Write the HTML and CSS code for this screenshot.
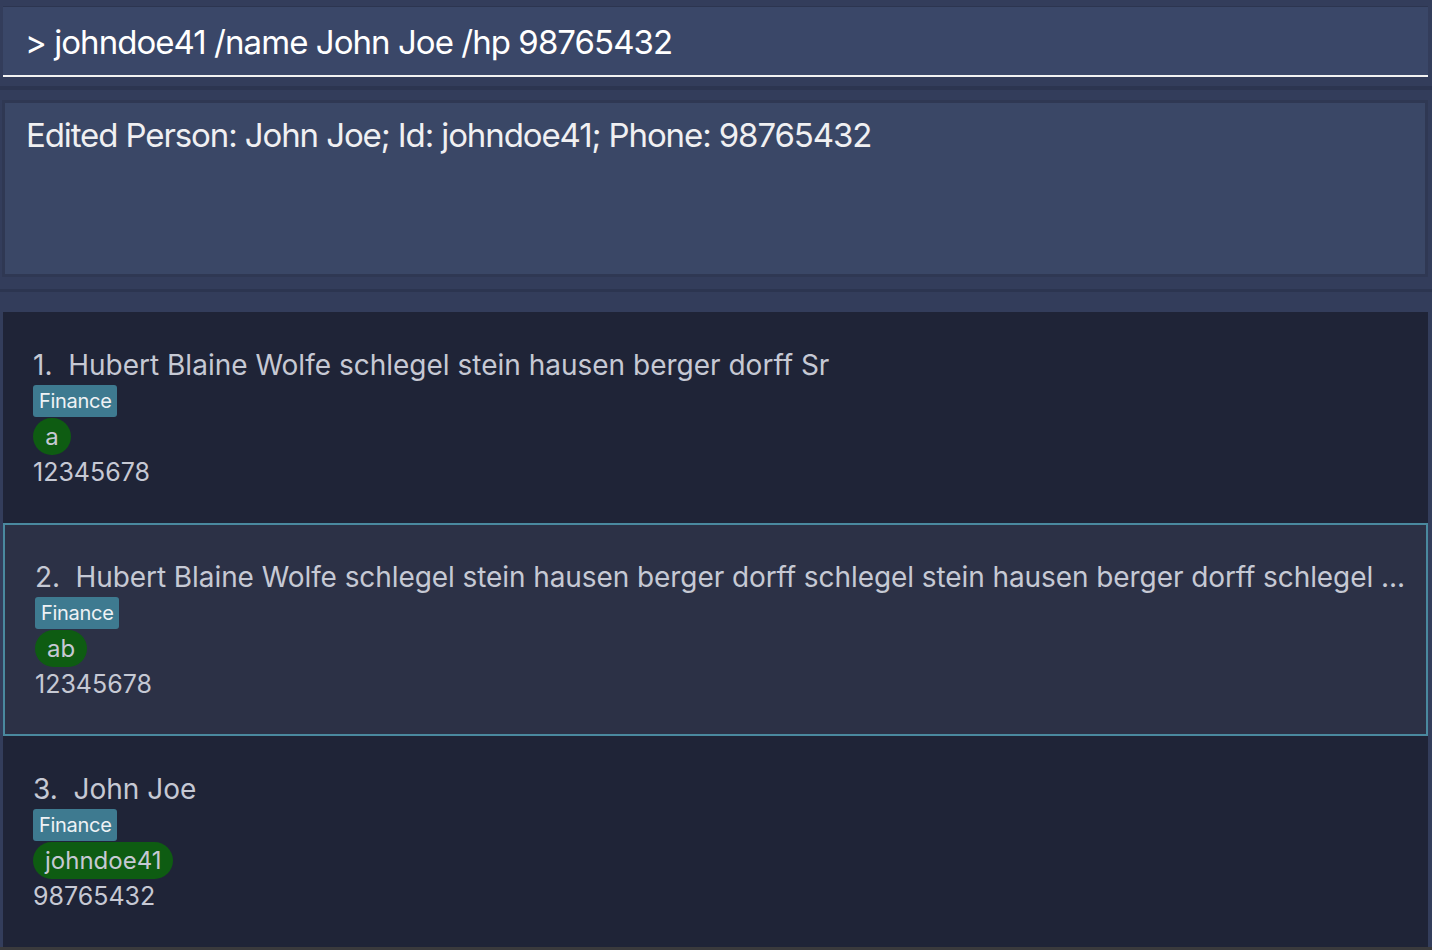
FILE: index.html
```html
<!DOCTYPE html>
<html>
<head>
<meta charset="utf-8">
<link rel="stylesheet" href="styles.css">
</head>
<body>
<div class="app">
  <div class="cmd-pane">
    <div class="cmd-box">&gt; johndoe41 /name John Joe /hp 98765432</div>
  </div>
  <div class="result-pane">
    <div class="result-box">Edited Person: John Joe; Id: johndoe41; Phone: 98765432</div>
  </div>
  <div class="list">
    <div class="card">
      <div class="name">1.&nbsp;&nbsp;Hubert Blaine Wolfe schlegel stein hausen berger dorff Sr</div>
      <div class="tags"><span class="tag">Finance</span></div>
      <div class="ids"><span class="id">a</span></div>
      <div class="phone">12345678</div>
    </div>
    <div class="card selected">
      <div class="name">2.&nbsp;&nbsp;Hubert Blaine Wolfe schlegel stein hausen berger dorff schlegel stein hausen berger dorff schlegel ...</div>
      <div class="tags"><span class="tag">Finance</span></div>
      <div class="ids"><span class="id">ab</span></div>
      <div class="phone">12345678</div>
    </div>
    <div class="card">
      <div class="name">3.&nbsp;&nbsp;John Joe</div>
      <div class="tags"><span class="tag">Finance</span></div>
      <div class="ids"><span class="id">johndoe41</span></div>
      <div class="phone">98765432</div>
    </div>
  </div>
  <div class="status"></div>
</div>
</body>
</html>
```
FILE: styles.css
```css
* { box-sizing: border-box; }
html, body { margin: 0; padding: 0; }
body {
  background: #333d5b;
  font-family: Inter, "Open Sans", sans-serif;
  width: 1432px;
  height: 950px;
  overflow: hidden;
}
.app {
  display: flex;
  flex-direction: column;
  height: 950px;
}
.cmd-pane {
  padding: 6px 4px 9px 3px;
  border-bottom: 4px solid #2c3550;
}
.cmd-box {
  height: 71px;
  background: #3a4768;
  border-top: 1px solid #2c3550;
  border-bottom: 2px solid #f2f2f2;
  color: #ffffff;
  font-size: 33px;
  letter-spacing: -0.95px;
  padding: 15px 0 0 22px;
  line-height: 40px;
  white-space: nowrap;
}
.result-pane {
  padding: 10px 4px 12px 2px;
  border-bottom: 3px solid #2c3550;
}
.result-box {
  height: 177px;
  background: #3a4766;
  border: 3px solid #2f3853;
  color: #f0f0f2;
  font-size: 33px;
  letter-spacing: -1.1px;
  padding: 10px 0 0 21px;
  line-height: 44px;
  white-space: nowrap;
}
.list {
  margin: 20px 4px 0 3px;
  background: #1f2437;
  flex: 1;
  display: flex;
  flex-direction: column;
}
.card {
  height: 211px;
  padding: 33px 20px 0 30px;
  color: #c6c9d4;
}
.card.selected {
  height: 213px;
  background: #2c3146;
  border: 2px solid #4a899f;
  padding: 32px 12px 0 30px;
}
.name {
  font-size: 28px;
  letter-spacing: 0;
  line-height: 40px;
  white-space: nowrap;
  overflow: hidden;
}
.card.selected .name {
  letter-spacing: -0.08px;
}
.tags, .ids {
  display: flex;
}
.tag {
  background: #3e7a90;
  color: #eef2f5;
  font-size: 20px;
  line-height: 32px;
  padding: 0 5px 0 6px;
  border-radius: 3px;
  letter-spacing: -0.3px;
}
.ids { margin-top: 1px; }
.id {
  background: #0e5c12;
  color: #c6c9d4;
  font-size: 24px;
  line-height: 37px;
  min-width: 38px;
  text-align: center;
  padding: 0 12px;
  border-radius: 19px;
  letter-spacing: 0;
}
.phone {
  font-size: 25px;
  line-height: 34px;
  letter-spacing: 0;
}
.status {
  height: 4px;
  background: #3a3a3c;
}
```
